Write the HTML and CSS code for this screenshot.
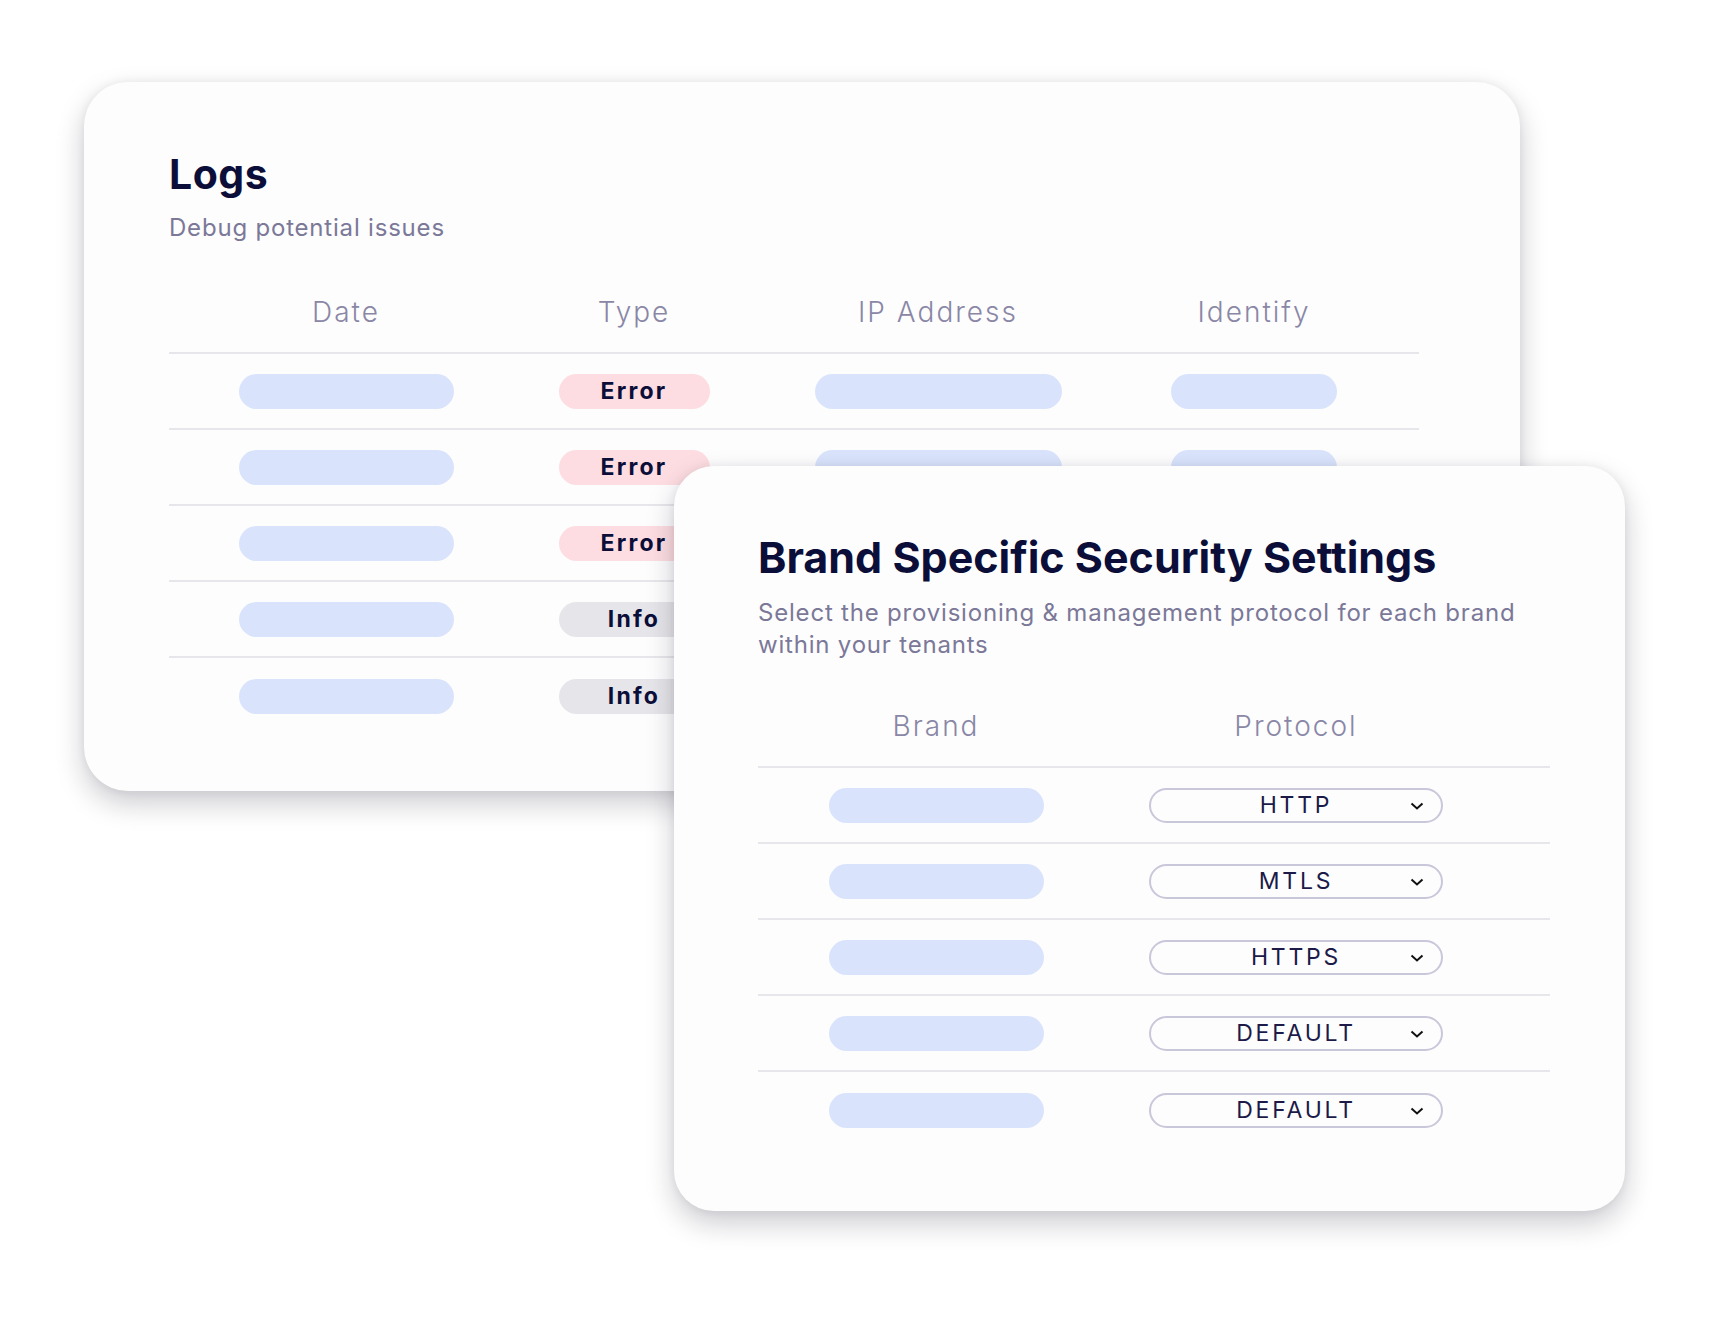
FILE: index.html
```html
<!DOCTYPE html>
<html lang="en">
<head>
  <meta charset="UTF-8" />
  <meta name="viewport" content="width=device-width, initial-scale=1.0" />
  <title>Logs &amp; Brand Security Settings</title>
  <link rel="stylesheet" href="styles.css">
</head>
<body>

  <div class="stage">

    <!-- Logs card -->
    <section class="card card-logs">
      <h1 class="card-title">Logs</h1>
      <p class="card-sub">Debug potential issues</p>

      <div class="table logs-table">
        <div class="row head">
          <span class="th">Date</span>
          <span class="th">Type</span>
          <span class="th">IP Address</span>
          <span class="th">Identify</span>
        </div>
        <div class="row">
          <span class="cell"><i class="bar bar-date"></i></span>
          <span class="cell"><b class="tag tag-error">Error</b></span>
          <span class="cell"><i class="bar bar-ip"></i></span>
          <span class="cell"><i class="bar bar-id"></i></span>
        </div>
        <div class="row">
          <span class="cell"><i class="bar bar-date"></i></span>
          <span class="cell"><b class="tag tag-error">Error</b></span>
          <span class="cell"><i class="bar bar-ip"></i></span>
          <span class="cell"><i class="bar bar-id"></i></span>
        </div>
        <div class="row">
          <span class="cell"><i class="bar bar-date"></i></span>
          <span class="cell"><b class="tag tag-error">Error</b></span>
          <span class="cell"><i class="bar bar-ip"></i></span>
          <span class="cell"><i class="bar bar-id"></i></span>
        </div>
        <div class="row">
          <span class="cell"><i class="bar bar-date"></i></span>
          <span class="cell"><b class="tag tag-info">Info</b></span>
          <span class="cell"><i class="bar bar-ip"></i></span>
          <span class="cell"><i class="bar bar-id"></i></span>
        </div>
        <div class="row">
          <span class="cell"><i class="bar bar-date"></i></span>
          <span class="cell"><b class="tag tag-info">Info</b></span>
          <span class="cell"><i class="bar bar-ip"></i></span>
          <span class="cell"><i class="bar bar-id"></i></span>
        </div>
      </div>
    </section>

    <!-- Brand settings card -->
    <section class="card card-brand">
      <h2 class="card-title">Brand Specific Security Settings</h2>
      <p class="card-sub">Select the provisioning &amp; management protocol for each brand within your tenants</p>

      <div class="table brand-table">
        <div class="row head">
          <span class="th">Brand</span>
          <span class="th">Protocol</span>
        </div>
        <div class="row">
          <span class="cell"><i class="bar bar-date"></i></span>
          <span class="cell"><span class="select">HTTP<svg class="chev" viewBox="0 0 14 8"><polyline points="1.5,1.5 7,6.5 12.5,1.5"/></svg></span></span>
        </div>
        <div class="row">
          <span class="cell"><i class="bar bar-date"></i></span>
          <span class="cell"><span class="select">MTLS<svg class="chev" viewBox="0 0 14 8"><polyline points="1.5,1.5 7,6.5 12.5,1.5"/></svg></span></span>
        </div>
        <div class="row">
          <span class="cell"><i class="bar bar-date"></i></span>
          <span class="cell"><span class="select">HTTPS<svg class="chev" viewBox="0 0 14 8"><polyline points="1.5,1.5 7,6.5 12.5,1.5"/></svg></span></span>
        </div>
        <div class="row">
          <span class="cell"><i class="bar bar-date"></i></span>
          <span class="cell"><span class="select">DEFAULT<svg class="chev" viewBox="0 0 14 8"><polyline points="1.5,1.5 7,6.5 12.5,1.5"/></svg></span></span>
        </div>
        <div class="row">
          <span class="cell"><i class="bar bar-date"></i></span>
          <span class="cell"><span class="select">DEFAULT<svg class="chev" viewBox="0 0 14 8"><polyline points="1.5,1.5 7,6.5 12.5,1.5"/></svg></span></span>
        </div>
      </div>
    </section>

  </div>

</body>
</html>
```

FILE: styles.css
```css
:root {
  --navy: #0b0e38;
  --muted: #7b7898;
  --head: #8a87a6;
  --line: #e7e7eb;
  --card-bg: #fdfdfe;
  --bar: #d9e4fc;
  --pink: #fddde1;
  --grey: #e6e5e9;
  --select-border: #c9c7da;
}

body {
  margin: 0;
  background: #fff;
  font-family: Inter, 'Noto Sans', sans-serif;
  color: var(--navy);
}

.stage {
  display: grid;
  padding: 82px 0 0 84px;
  width: 1730px;
  height: 1334px;
  box-sizing: border-box;
}

/* both cards share one grid cell and overlap */
.card {
  grid-area: 1 / 1;
  background: var(--card-bg);
  box-sizing: border-box;
  box-shadow: 0 12px 28px rgba(20, 20, 40, 0.22), 0 0 10px rgba(20, 20, 40, 0.06);
}

.card-logs {
  width: 1436px;
  height: 709px;
  border-radius: 44px;
  padding: 68px 0 0 85px;
}

.card-brand {
  width: 951px;
  height: 745px;
  border-radius: 40px;
  margin: 384px 0 0 590px;
  padding: 65px 0 0 84px;
}

.card-title {
  margin: 0;
  font-weight: 700;
}

.card-logs .card-title {
  font-size: 41px;
  line-height: 48px;
  letter-spacing: 0.5px;
}

.card-brand .card-title {
  font-size: 43px;
  line-height: 52px;
}

.card-sub {
  margin: 15px 0 0;
  color: var(--muted);
  font-size: 24px;
  line-height: 30px;
  letter-spacing: 0.8px;
}

.card-brand .card-sub {
  margin-top: 14px;
  line-height: 32px;
  max-width: 792px;
}

/* tables */
.table {
  margin-top: 54px;
}

.logs-table { width: 1250px; }
.brand-table { width: 792px; margin-top: 50px; }

.row {
  display: grid;
  align-items: center;
  height: 76px;
  border-bottom: 2px solid var(--line);
  box-sizing: border-box;
}

.row:last-child { border-bottom: none; }

.row.head {
  height: auto;
  padding-bottom: 25px;
}

.logs-table .row { grid-template-columns: 354px 222px 386px 246px; }
.brand-table .row { grid-template-columns: 356px 364px; }

.th {
  text-align: center;
  color: var(--head);
  font-size: 28px;
  font-weight: 300;
  letter-spacing: 2px;
  line-height: 30px;
}

.cell {
  display: flex;
  justify-content: center;
}

.bar {
  display: block;
  height: 35px;
  border-radius: 18px;
  background: var(--bar);
}

.bar-date { width: 215px; }
.bar-ip { width: 247px; }
.bar-id { width: 166px; }

.tag {
  display: flex;
  align-items: center;
  justify-content: center;
  width: 151px;
  height: 35px;
  border-radius: 18px;
  font-size: 23px;
  font-weight: 700;
  letter-spacing: 2.2px;
}

.tag-error { background: var(--pink); }
.tag-info { background: var(--grey); }

/* fake dropdown */
.select {
  position: relative;
  display: flex;
  align-items: center;
  justify-content: center;
  width: 294px;
  height: 35px;
  box-sizing: border-box;
  border: 2px solid var(--select-border);
  border-radius: 18px;
  font-size: 23px;
  letter-spacing: 2.8px;
  color: #1b1a48;
}

.chev {
  position: absolute;
  right: 17px;
  top: 12px;
  width: 14px;
  height: 8px;
  fill: none;
  stroke: #111;
  stroke-width: 2;
}
```
